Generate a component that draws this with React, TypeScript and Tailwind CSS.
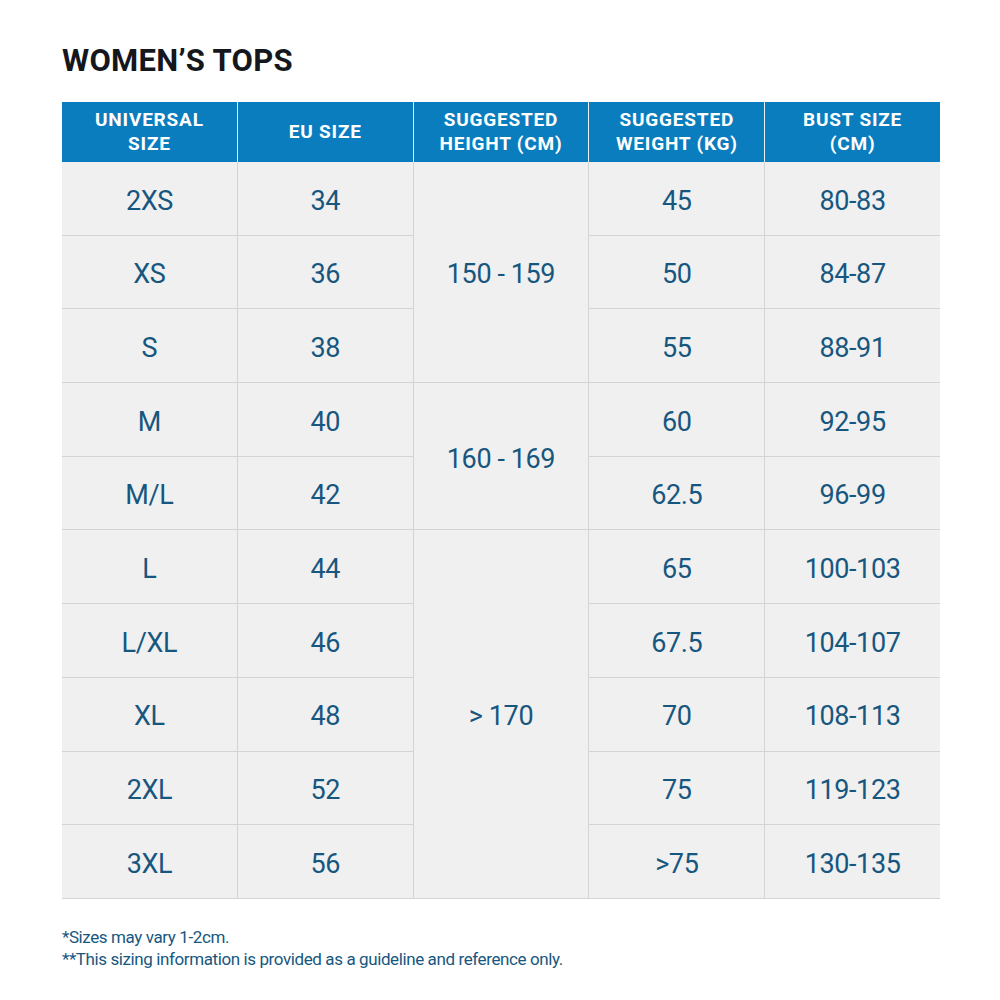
const rows = [
  { u: "2XS", eu: "34", w: "45", b: "80-83" },
  { u: "XS", eu: "36", w: "50", b: "84-87" },
  { u: "S", eu: "38", w: "55", b: "88-91" },
  { u: "M", eu: "40", w: "60", b: "92-95" },
  { u: "M/L", eu: "42", w: "62.5", b: "96-99" },
  { u: "L", eu: "44", w: "65", b: "100-103" },
  { u: "L/XL", eu: "46", w: "67.5", b: "104-107" },
  { u: "XL", eu: "48", w: "70", b: "108-113" },
  { u: "2XL", eu: "52", w: "75", b: "119-123" },
  { u: "3XL", eu: "56", w: ">75", b: "130-135" },
];

const heights = [
  { label: "150 - 159", row: "row-start-1 row-end-4" },
  { label: "160 - 169", row: "row-start-4 row-end-6" },
  { label: "> 170", row: "row-start-6 row-end-11" },
];

const headers = [
  ["UNIVERSAL", "SIZE"],
  ["EU SIZE"],
  ["SUGGESTED", "HEIGHT (CM)"],
  ["SUGGESTED", "WEIGHT (KG)"],
  ["BUST SIZE", "(CM)"],
];

const cell =
  "bg-[#f0f0f0] flex items-center justify-center pt-[5px] text-[27px] tracking-[-0.4px] text-[#17577f]";

export default function App() {
  return (
    <div className="w-[1000px] h-[1000px] bg-white font-['Roboto',sans-serif] pt-[42px] pl-[62px]">
      <h1 className="text-[31px] leading-[38px] font-bold text-[#14171c] tracking-[0.3px]">
        WOMEN’S TOPS
      </h1>

      <div className="w-[878px] mt-[22px]">
        {/* Header */}
        <div className="grid grid-cols-5 gap-px bg-[#e6f1f8] h-[60px]">
          {headers.map((h, i) => (
            <div
              key={i}
              className="bg-[#0a7dbe] flex flex-col items-center justify-center text-white font-bold text-[19px] leading-[24px] tracking-[0.8px]"
            >
              {h.map((l) => (
                <span key={l}>{l}</span>
              ))}
            </div>
          ))}
        </div>

        {/* Body */}
        <div className="grid grid-cols-5 grid-rows-[repeat(10,minmax(0,1fr))] grid-flow-col gap-px bg-[#d4d4d4] h-[737px] border-b border-[#d4d4d4]">
          {rows.map((r) => (
            <div key={"u" + r.u} className={cell + " col-start-1"}>
              {r.u}
            </div>
          ))}
          {rows.map((r) => (
            <div key={"e" + r.eu} className={cell + " col-start-2"}>
              {r.eu}
            </div>
          ))}
          {heights.map((h) => (
            <div key={h.label} className={cell + " col-start-3 " + h.row}>
              {h.label}
            </div>
          ))}
          {rows.map((r) => (
            <div key={"w" + r.w} className={cell + " col-start-4"}>
              {r.w}
            </div>
          ))}
          {rows.map((r) => (
            <div key={"b" + r.b} className={cell + " col-start-5"}>
              {r.b}
            </div>
          ))}
        </div>
      </div>

      {/* Notes */}
      <div className="mt-[27px] text-[17px] leading-[22px] tracking-[-0.4px] text-[#17577f]">
        <p>*Sizes may vary 1-2cm.</p>
        <p>**This sizing information is provided as a guideline and reference only.</p>
      </div>
    </div>
  );
}
